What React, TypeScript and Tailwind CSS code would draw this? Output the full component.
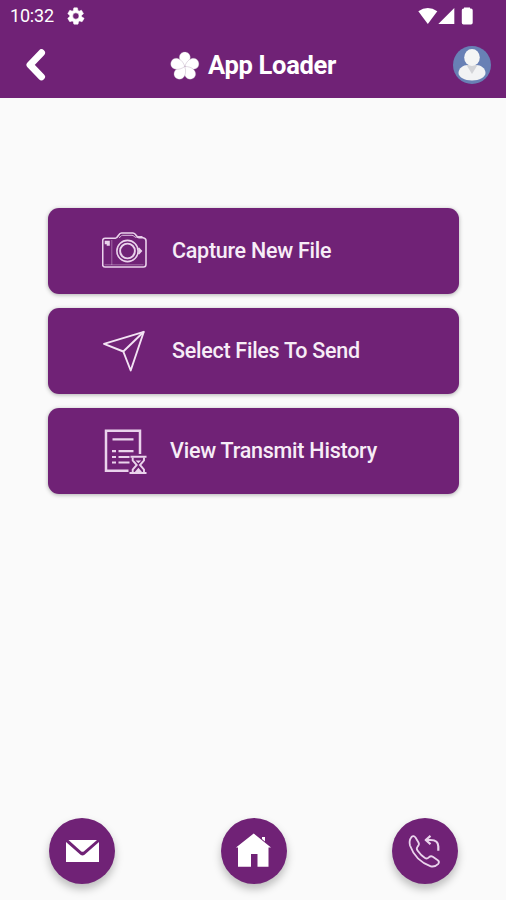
import type { ReactNode } from "react";

type ActionProps = {
  label: string;
  icon: ReactNode;
  textClass: string;
};

function StatusBar() {
  return (
    <div className="flex h-8 items-center justify-between pr-[33px] pl-[10px]">
      <div className="flex items-center gap-[13px]">
        <span className="w-[44px] text-[18px] leading-8 tracking-[-0.2px] whitespace-nowrap">10:32</span>
        <svg className="size-[18px]" viewBox="0 0 24 24" fill="currentColor">
          <path
            fillRule="evenodd"
            d="M19.4 13a7.5 7.5 0 0 0 0-2l2.3-1.8a.5.5 0 0 0 .1-.7l-2.3-3.9a.5.5 0 0 0-.6-.2l-2.8 1.1a7 7 0 0 0-1.6-1l-.4-2.9a.5.5 0 0 0-.5-.5H9.4a.5.5 0 0 0-.5.5l-.4 2.9a8 8 0 0 0-1.6 1L4.1 4.4a.5.5 0 0 0-.6.2L1.2 8.5a.5.5 0 0 0 .1.7L3.6 11a8 8 0 0 0 0 2l-2.3 1.8a.5.5 0 0 0-.1.7l2.3 3.9c.1.2.4.3.6.2l2.8-1.1c.5.4 1 .7 1.600 1l.4 2.900c0 .2.2.5.5.5h5c.3 0 .5-.2.5-.5l.4-2.900a7 7 0 0 0 1.600-1l2.800 1.100c.2.100.5 0 .6-.2l2.300-3.900a.5.5 0 0 0-.1-.7zM11.800 16.200a4.200 4.200 0 1 1 0-8.400 4.200 4.200 0 0 1 0 8.400z"
            stroke="currentColor"
            strokeWidth="0.7"
          />
        </svg>
      </div>
      <svg className="h-[18px] w-[55px]" viewBox="418 6 55 18" fill="currentColor">
        <path d="M418.300 10.300q9.500-6.600 19 0l-9.500 12.700z" />
        <path d="M454.300 7v16h-16z" />
        <path d="M464 7.500v-1h6v1h1q1.700 0 1.700 1.700v12.500q0 1.700-1.700 1.700h-7.500q-1.700 0-1.700-1.700V9.200q0-1.700 1.700-1.700z" />
      </svg>
    </div>
  );
}

function Flower() {
  return (
    <svg className="h-[29px] w-[30px] shrink-0" viewBox="170 50 30 29">
      <g fill="#fff" stroke="#a58aaa" strokeWidth="0.3">
        <path d="M184.800 65.500C176.500 59.500 178.500 51 184.800 51s8.300 8.500 0 14.500z" />
        <path d="M184.800 65.500C176.500 59.500 178.500 51 184.800 51s8.300 8.500 0 14.500z" transform="rotate(72 184.800 65.500)" />
        <path d="M184.800 65.500C176.500 59.500 178.500 51 184.800 51s8.300 8.500 0 14.500z" transform="rotate(144 184.800 65.500)" />
        <path d="M184.800 65.500C176.500 59.500 178.500 51 184.800 51s8.300 8.500 0 14.500z" transform="rotate(216 184.800 65.500)" />
        <path d="M184.800 65.500C176.500 59.500 178.500 51 184.800 51s8.300 8.500 0 14.500z" transform="rotate(288 184.800 65.500)" />
      </g>
    </svg>
  );
}

function Avatar() {
  return (
    <svg className="size-[38px]" viewBox="0 0 38 38">
      <circle cx="19" cy="19" r="19" fill="#6880b5" />
      <path d="M5.500 27c0-5 5-8 9-8h9c4 0 9 3 9 8 0 4-6 7.500-13.500 7.500S5.500 31 5.500 27z" fill="#f2f3f4" />
      <path d="M13.500 19h11L19 28z" fill="#d2d3d7" />
      <ellipse cx="19" cy="11.500" rx="7.800" ry="8.500" fill="#f4f5f5" />
    </svg>
  );
}

function Header() {
  return (
    <header className="h-[98px] bg-[#702276] text-white">
      <StatusBar />
      <div className="flex h-[66px] items-center justify-between pr-[15px] pl-[24px]">
        <svg className="size-[34px]" viewBox="24 48 34 34" fill="none" stroke="currentColor">
          <path d="M41.500 52.800 30 64.800l11.500 12" strokeWidth="7" strokeLinecap="round" strokeLinejoin="round" />
        </svg>
        <h1 className="flex items-center gap-[8px] pr-[5px] text-[25.5px] font-bold">
          <Flower />
          <span className="w-[128px] pt-px tracking-[-0.3px] whitespace-nowrap">App Loader</span>
        </h1>
        <Avatar />
      </div>
    </header>
  );
}

function CameraIcon() {
  return (
    <svg className="h-[46px] w-[46px]" viewBox="102 228 46 46" fill="none" stroke="#ead3ec" strokeWidth="1.600">
      <path d="M105 238.200h10.500c2.500 0 3-5.200 6-5.200h11.500c3 0 3.500 4.800 6 4.800h4q3 .4 3 3v23.500q0 2.700-2.500 2.700H105q-2.300 0-2.300-2.300v-24.200q0-2.300 2.300-2.300z" />
      <path d="M119 237.500c1.600 0 2-2.200 3.500-2.200h9.500c1.800 0 2.500 2.200 4.500 2.200" strokeWidth="0.900" />
      <path d="M111.800 240v25" strokeWidth="0.700" opacity="0.600" />
      <path d="M104.500 264.800h39" strokeWidth="0.700" opacity="0.600" />
      <circle cx="127.500" cy="251" r="10.600" />
      <circle cx="127.500" cy="251" r="7.400" strokeWidth="1.900" />
      <path d="m138.500 248 2.800 3-2.800 3" fill="#ead3ec" />
      <path d="M105.500 241.500h3.500v3.500h-1.500v-1.500h-2z" fill="#ead3ec" />
      <path d="M137 236.800h5.500" strokeWidth="1.500" />
    </svg>
  );
}

function PlaneIcon() {
  return (
    <svg className="h-[46px] w-[46px]" viewBox="102 328 46 46" fill="none" stroke="#f3e3f4" strokeWidth="1.900" strokeLinejoin="round">
      <path d="m104 343.900 39.800-12.100-13.100 38.700-7.400-19z" />
      <path d="m143.800 331.800-20.500 19.700" />
    </svg>
  );
}

function HistoryIcon() {
  return (
    <svg className="h-[46px] w-[46px]" viewBox="102 428 46 46" fill="none" stroke="#ead3ec" strokeWidth="2.500">
      <path d="M140 454v-23.300h-34v40h22.500" />
      <path d="M112.500 439.300h21M118.500 451.200h15M118.500 457h11M118.500 462.500h11" strokeWidth="2.200" />
      <path d="M112 451.200h4M112 457h4M112 462.500h4" strokeWidth="2.200" />
      <path d="M130.500 456.800h16M129.500 473h17" strokeWidth="2" />
      <path d="M132.700 457.500v3l4 4.500-4 4.500v3M144 457.500v3l-4 4.500 4 4.500v3" strokeWidth="1.900" />
      <path d="m134.800 472 3.600-4.300 3.600 4.300zM135.500 460.500h5.700l-2.850 2.800z" fill="#ead3ec" stroke="none" />
    </svg>
  );
}

function ActionButton({ label, icon, textClass }: ActionProps) {
  return (
    <button className="flex h-[86px] w-[411px] items-center rounded-[11px] bg-[#702276] pl-[54px] text-[#f7edf7] shadow-[0_1px_4px_rgba(0,0,0,0.3)]">
      {icon}
      <span className={textClass}>{label}</span>
    </button>
  );
}

function RoundButton({ label, children }: { label: string; children: ReactNode }) {
  return (
    <button
      aria-label={label}
      className="flex size-[66px] items-center justify-center rounded-full bg-[#702276] text-white shadow-[0_5px_8px_rgba(0,0,0,0.25)]"
    >
      {children}
    </button>
  );
}

export default function App() {
  return (
    <div className="flex h-[900px] w-[506px] flex-col bg-[#fafafa] font-['Roboto',sans-serif]">
      <Header />
      <main className="flex flex-1 flex-col gap-[14px] pt-[110px] pl-[48px]">
        <ActionButton
          label="Capture New File"
          icon={<CameraIcon />}
          textClass="pt-px pl-[24px] text-[21.5px] font-medium tracking-[-0.27px] whitespace-nowrap"
        />
        <ActionButton
          label="Select Files To Send"
          icon={<PlaneIcon />}
          textClass="pt-px pl-[24px] text-[21.5px] font-medium tracking-[-0.27px] whitespace-nowrap"
        />
        <ActionButton
          label="View Transmit History"
          icon={<HistoryIcon />}
          textClass="pt-px pl-[22px] text-[21.5px] font-medium tracking-[-0.23px] whitespace-nowrap"
        />
      </main>
      <nav className="flex h-[82px] justify-between pr-[48px] pl-[49px]">
        <RoundButton label="Messages">
          <svg className="size-[66px]" viewBox="49 818 66 66">
            <path d="M66 842v20h33v-20l-14.500 12.700q-2 1.600-4 0z" fill="currentColor" />
            <path d="M68.500 840h28.500L84 851.300q-1.500 1-3 0z" fill="currentColor" />
          </svg>
        </RoundButton>
        <RoundButton label="Home">
          <svg className="size-[66px]" viewBox="221 818 66 66" fill="currentColor">
            <path d="M253.700 833.500 271 847.500h-2.500v19.300h-11V854h-6.500v12.800h-13v-19.300H236z" />
            <path d="M262 837h3v4.500l-3-2.500z" />
          </svg>
        </RoundButton>
        <RoundButton label="Call back">
          <svg className="size-[66px]" viewBox="392 818 66 66" fill="none" stroke="#ead3ec" strokeWidth="1.800" strokeLinejoin="round">
            <path d="M411.500 837q2-2 4 .5l3 5q1.200 2-.8 4-1.700 1.800-.2 4 3.500 5 7.500 7.500 2 1.200 3.800-.7 2-1.800 4-.5l5 3.500q2 1.500.5 3.500-3.500 3.500-7.500 2.500c-10-3.500-17.500-11.500-20.800-20.800q-1.300-5 1.500-8.500z" />
            <path d="m430.500 835.800-4.800 4.200 4.800 4.200M426 840h4.500c5 0 7.800 2 7.800 6.500v4.300" strokeWidth="2.200" />
          </svg>
        </RoundButton>
      </nav>
    </div>
  );
}
